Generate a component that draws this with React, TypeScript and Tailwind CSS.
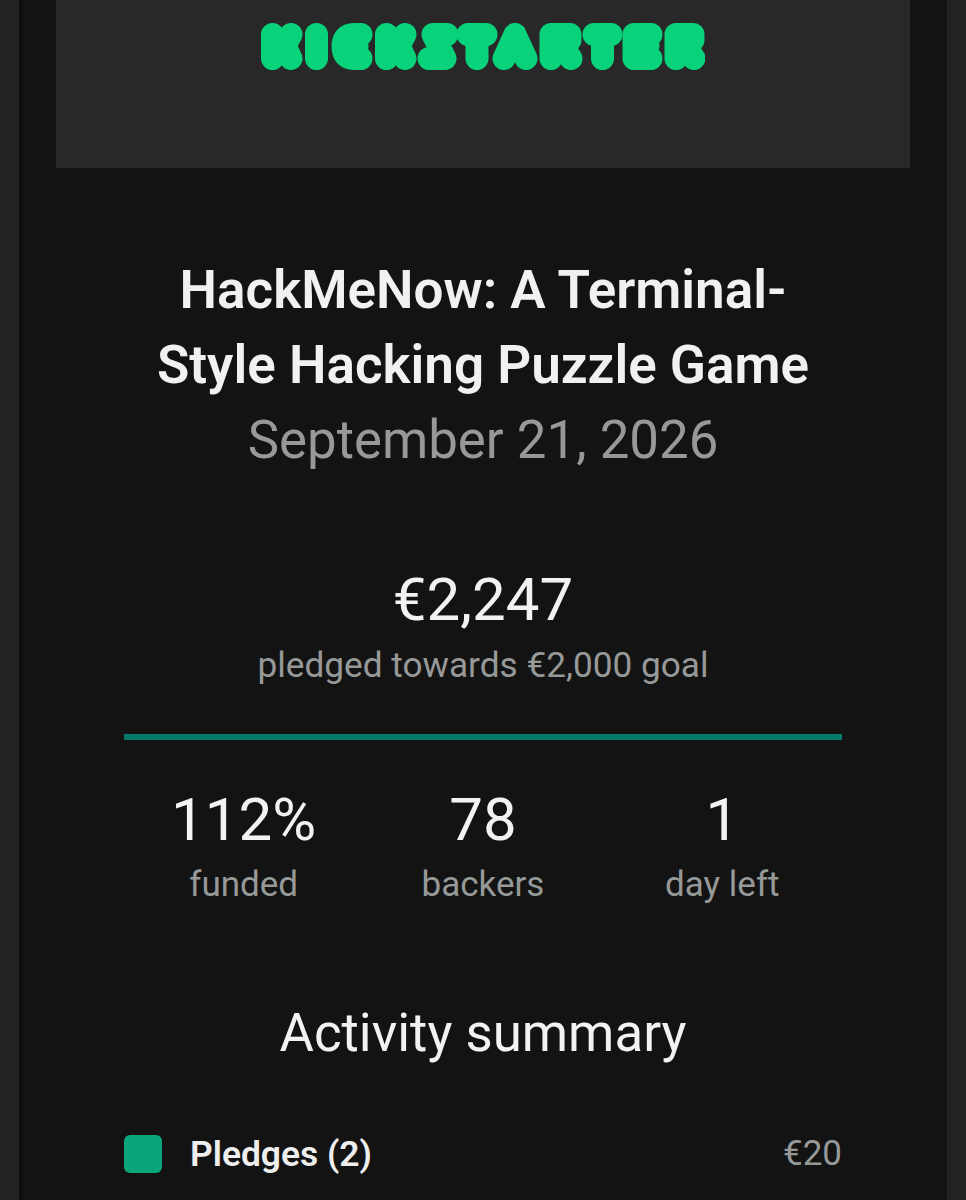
const font = { fontFamily: "Roboto, sans-serif" };

function KickstarterLogo() {
  return (
    <svg width="444" height="47" viewBox="0 0 444 47" fill="none" stroke="#08d27a" strokeWidth="23" strokeLinecap="round" strokeLinejoin="round">
      {/* K */}
      <path d="M11.5 11.5V35.5M30 11.5L24 23L30 35.5M11.5 23H24" />
      {/* I */}
      <path d="M55.5 11.5V35.5" />
      {/* C */}
      <path d="M100 11.5H93Q82 11.5 82 23.5Q82 35.5 93 35.5H100" />
      <path d="M90 23.5H96" />
      {/* K */}
      <path d="M125.5 11.5V35.5M144 11.5L138 23L144 35.5M125.5 23H138" />
      {/* S */}
      <path d="M186 11.5H172L184 35.5H168" />
      {/* T */}
      <path d="M207 11.5H225M216 11.5V35.5" />
      {/* A */}
      <path d="M254 11.5L243 35.5M254 11.5L265 35.5" />
      {/* R */}
      <path d="M290 35.5V11.5H309V17L302 23L310 35.5M290 23H302" />
      {/* T */}
      <path d="M333 11.5H350M341.5 11.5V35.5" />
      {/* E */}
      <path d="M373 11.5V35.5M373 11.5H390M373 23H387M373 35.5H390" />
      {/* R */}
      <path d="M415 35.5V11.5H432V17L425 23L433 35.5M415 23H425" />
    </svg>
  );
}

function Stat({ value, label }: { value: string; label: string }) {
  return (
    <div className="flex flex-col items-center">
      <div className="text-[60px] leading-[68px] text-[#f2f2f2]">{value}</div>
      <div className="mt-[11px] text-[35px] leading-[40px] text-[#979999]">{label}</div>
    </div>
  );
}

export default function App() {
  return (
    <div className="h-[1200px] overflow-hidden bg-[#222222] px-[19px]" style={font}>
      <div className="h-full bg-[#131313] px-[37px] border-l-4 border-l-[#0f0f0f]">
        <div className="flex h-[168px] justify-center bg-[#282828] pt-[23px] -ml-[4px]">
          <KickstarterLogo />
        </div>

        <div className="-ml-[4px]">
          <h1 className="mt-[85px] text-center text-[53px] font-semibold leading-[75px] text-[#f1f1f1]">
            HackMeNow: A Terminal-
            <br />
            Style Hacking Puzzle Game
          </h1>
          <div className="text-center text-[52.8px] leading-[75px] text-[#979999]">September 21, 2026</div>

          <div className="mt-[88px] text-center text-[60px] leading-[68px] text-[#f2f2f2]">€2,247</div>
          <div className="mt-[11px] text-center text-[35.2px] leading-[40px] text-[#979999]">pledged towards €2,000 goal</div>

          <div className="mx-[68px] mt-[49px] h-[6px] bg-[#067a6a]" />

          <div className="mx-[68px] mt-[46px] grid grid-cols-3">
            <Stat value="112%" label="funded" />
            <Stat value="78" label="backers" />
            <Stat value="1" label="day left" />
          </div>

          <h2 className="mt-[98px] text-center text-[52.8px] leading-[60px] text-[#f2f2f2]">Activity summary</h2>

          <div className="mx-[68px] mt-[71px] flex items-center">
            <div className="h-[38px] w-[38px] rounded-md bg-[#0aa57b]" />
            <div className="ml-[28px] text-[35.4px] font-semibold leading-[40px] text-[#eeeeee]">Pledges (2)</div>
            <div className="ml-auto text-[35px] leading-[40px] text-[#979999]">€20</div>
          </div>
        </div>
      </div>
    </div>
  );
}
